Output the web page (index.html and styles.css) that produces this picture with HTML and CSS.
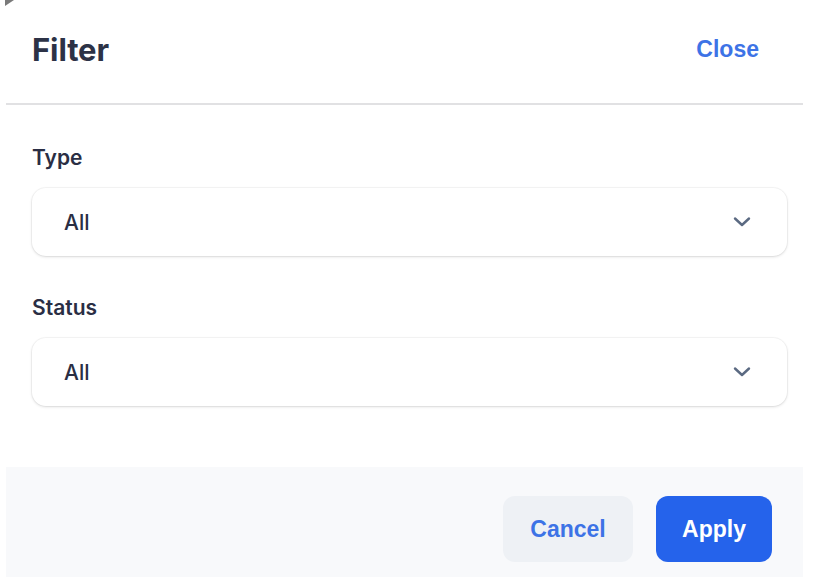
FILE: index.html
```html
<!DOCTYPE html>
<html lang="en">
<head>
<meta charset="utf-8">
<title>Filter</title>
<link rel="stylesheet" href="styles.css">
</head>
<body>
<svg class="corner" width="16" height="8" viewBox="0 0 16 8" aria-hidden="true"><polygon points="5,0 14,0 5,6" fill="#7a7a7a"/></svg>
<div class="panel">
  <header class="panel-header">
    <h1 class="title">Filter</h1>
    <button class="link-btn" type="button">Close</button>
  </header>
  <div class="panel-body">
    <div class="field">
      <label class="field-label">Type</label>
      <div class="select">
        <span class="select-value">All</span>
        <svg class="chevron" width="20" height="12" viewBox="0 0 20 12" aria-hidden="true"><path d="M3 2.5 L10 9 L17 2.5" fill="none" stroke="#5b6a82" stroke-width="2.4" stroke-linecap="round" stroke-linejoin="round"/></svg>
      </div>
    </div>
    <div class="field">
      <label class="field-label">Status</label>
      <div class="select">
        <span class="select-value">All</span>
        <svg class="chevron" width="20" height="12" viewBox="0 0 20 12" aria-hidden="true"><path d="M3 2.5 L10 9 L17 2.5" fill="none" stroke="#5b6a82" stroke-width="2.4" stroke-linecap="round" stroke-linejoin="round"/></svg>
      </div>
    </div>
  </div>
  <footer class="panel-footer">
    <button class="btn btn-secondary" type="button">Cancel</button>
    <button class="btn btn-primary" type="button">Apply</button>
  </footer>
</div>
</body>
</html>
```
FILE: styles.css
```css
html, body {
  margin: 0;
  padding: 0;
  background: #ffffff;
}

body {
  font-family: Inter, "Noto Sans", sans-serif;
  position: relative;
  width: 822px;
  height: 582px;
  overflow: hidden;
}

.corner {
  position: absolute;
  left: 0;
  top: 0;
}

.panel {
  margin-left: 6px;
  width: 797px;
  background: #ffffff;
}

.panel-header {
  height: 99px;
  padding: 0 44px 4px 26px;
  border-bottom: 2px solid #e1e1e3;
  display: flex;
  align-items: center;
  justify-content: space-between;
  box-sizing: content-box;
}

.title {
  margin: 0;
  font-size: 31px;
  font-weight: 700;
  color: #2c3246;
  line-height: 1;
  letter-spacing: -0.1px;
}

.link-btn {
  border: 0;
  background: transparent;
  padding: 0;
  font-family: "Liberation Sans", Arial, sans-serif;
  font-size: 23px;
  font-weight: 600;
  color: #3d73e6;
  cursor: pointer;
}

.panel-body {
  padding: 40px 16px 0 26px;
  display: flex;
  flex-direction: column;
  gap: 39px;
}

.field {
  display: flex;
  flex-direction: column;
  gap: 17px;
}

.field-label {
  font-size: 21px;
  line-height: 26px;
  font-weight: 600;
  color: #2a2e44;
}

.select {
  height: 68px;
  background: #ffffff;
  border-radius: 14px;
  box-shadow: 0 1px 3px rgba(0, 0, 0, 0.13), 0 0 0 1px rgba(0, 0, 0, 0.035);
  display: flex;
  align-items: center;
  justify-content: space-between;
  padding: 0 35px 0 32px;
}

.select-value {
  font-size: 21px;
  font-weight: 500;
  color: #2a2e44;
}

.chevron {
  display: block;
}

.panel-footer {
  margin-top: 61px;
  height: 110px;
  background: #f8f9fb;
  display: flex;
  justify-content: flex-end;
  align-items: flex-start;
  gap: 23px;
  padding: 29px 31px 0 0;
  box-sizing: border-box;
}

.btn {
  height: 66px;
  border: 0;
  border-radius: 12px;
  font-family: "Liberation Sans", Arial, sans-serif;
  font-size: 23px;
  font-weight: 600;
  cursor: pointer;
}

.btn-secondary {
  width: 130px;
  background: #eef1f5;
  color: #3d73e6;
}

.btn-primary {
  width: 116px;
  background: #2563eb;
  color: #ffffff;
}
```
